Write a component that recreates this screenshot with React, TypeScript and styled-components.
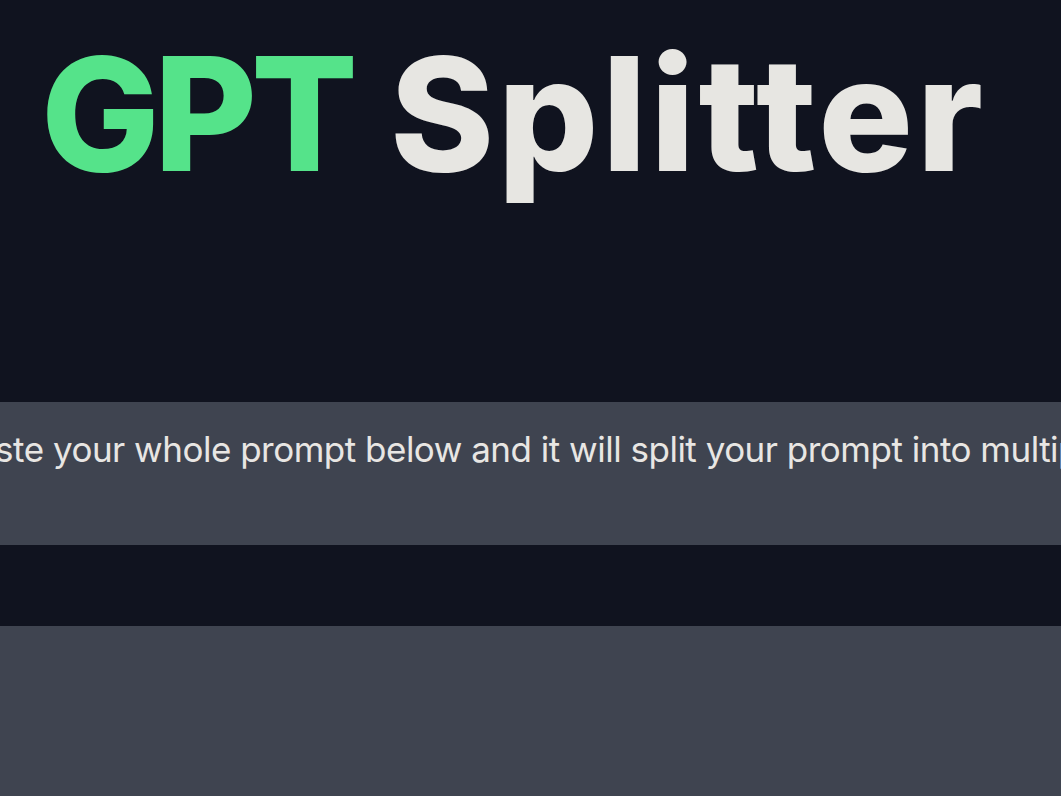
import React from "react";
import styled, { createGlobalStyle } from "styled-components";

const Global = createGlobalStyle`
  html, body {
    margin: 0;
    padding: 0;
    background: #10131f;
    overflow: hidden;
  }
  * { box-sizing: border-box; }
`;

const Page = styled.main`
  width: 100%;
  height: 796px;
  display: flex;
  flex-direction: column;
  background: #10131f;
  font-family: Inter, "Open Sans", sans-serif;
  overflow: hidden;
`;

const Header = styled.header`
  height: 402px;
  flex: none;
  padding: 35px 0 0 41px;
`;

const Title = styled.h1`
  margin: 0;
  font-family: Inter, sans-serif;
  font-weight: 800;
  font-size: 158px;
  line-height: 1;
  letter-spacing: 3.5px;
  color: #e7e6e2;
  white-space: nowrap;
`;

const Accent = styled.span`
  color: #55e38a;
  letter-spacing: -6px;
`;

const Band = styled.section`
  height: 143px;
  flex: none;
  background: #3f4450;
  display: flex;
  justify-content: center;
  align-items: flex-start;
  padding-top: 27px;
  overflow: hidden;
`;

const Lead = styled.p`
  margin: 0;
  flex: none;
  white-space: nowrap;
  font-family: Inter, sans-serif;
  font-weight: 400;
  font-size: 35px;
  line-height: 40px;
  letter-spacing: -0.5px;
  color: #e8e6e3;
`;

const Spacer = styled.div`
  height: 81px;
  flex: none;
`;

const Editor = styled.textarea`
  flex: 1;
  width: 100%;
  border: none;
  outline: none;
  resize: none;
  background: #3f4450;
  color: #e8e6e3;
  font-family: Inter, sans-serif;
  font-size: 20px;
  padding: 16px;
`;

export default function App() {
  return (
    <>
      <Global />
      <Page>
        <Header>
          <Title>
            <Accent>GPT</Accent> Splitter
          </Title>
        </Header>
        <Band>
          <Lead>Paste your whole prompt below and it will split your prompt into multiple</Lead>
        </Band>
        <Spacer />
        <Editor aria-label="Prompt" />
      </Page>
    </>
  );
}
